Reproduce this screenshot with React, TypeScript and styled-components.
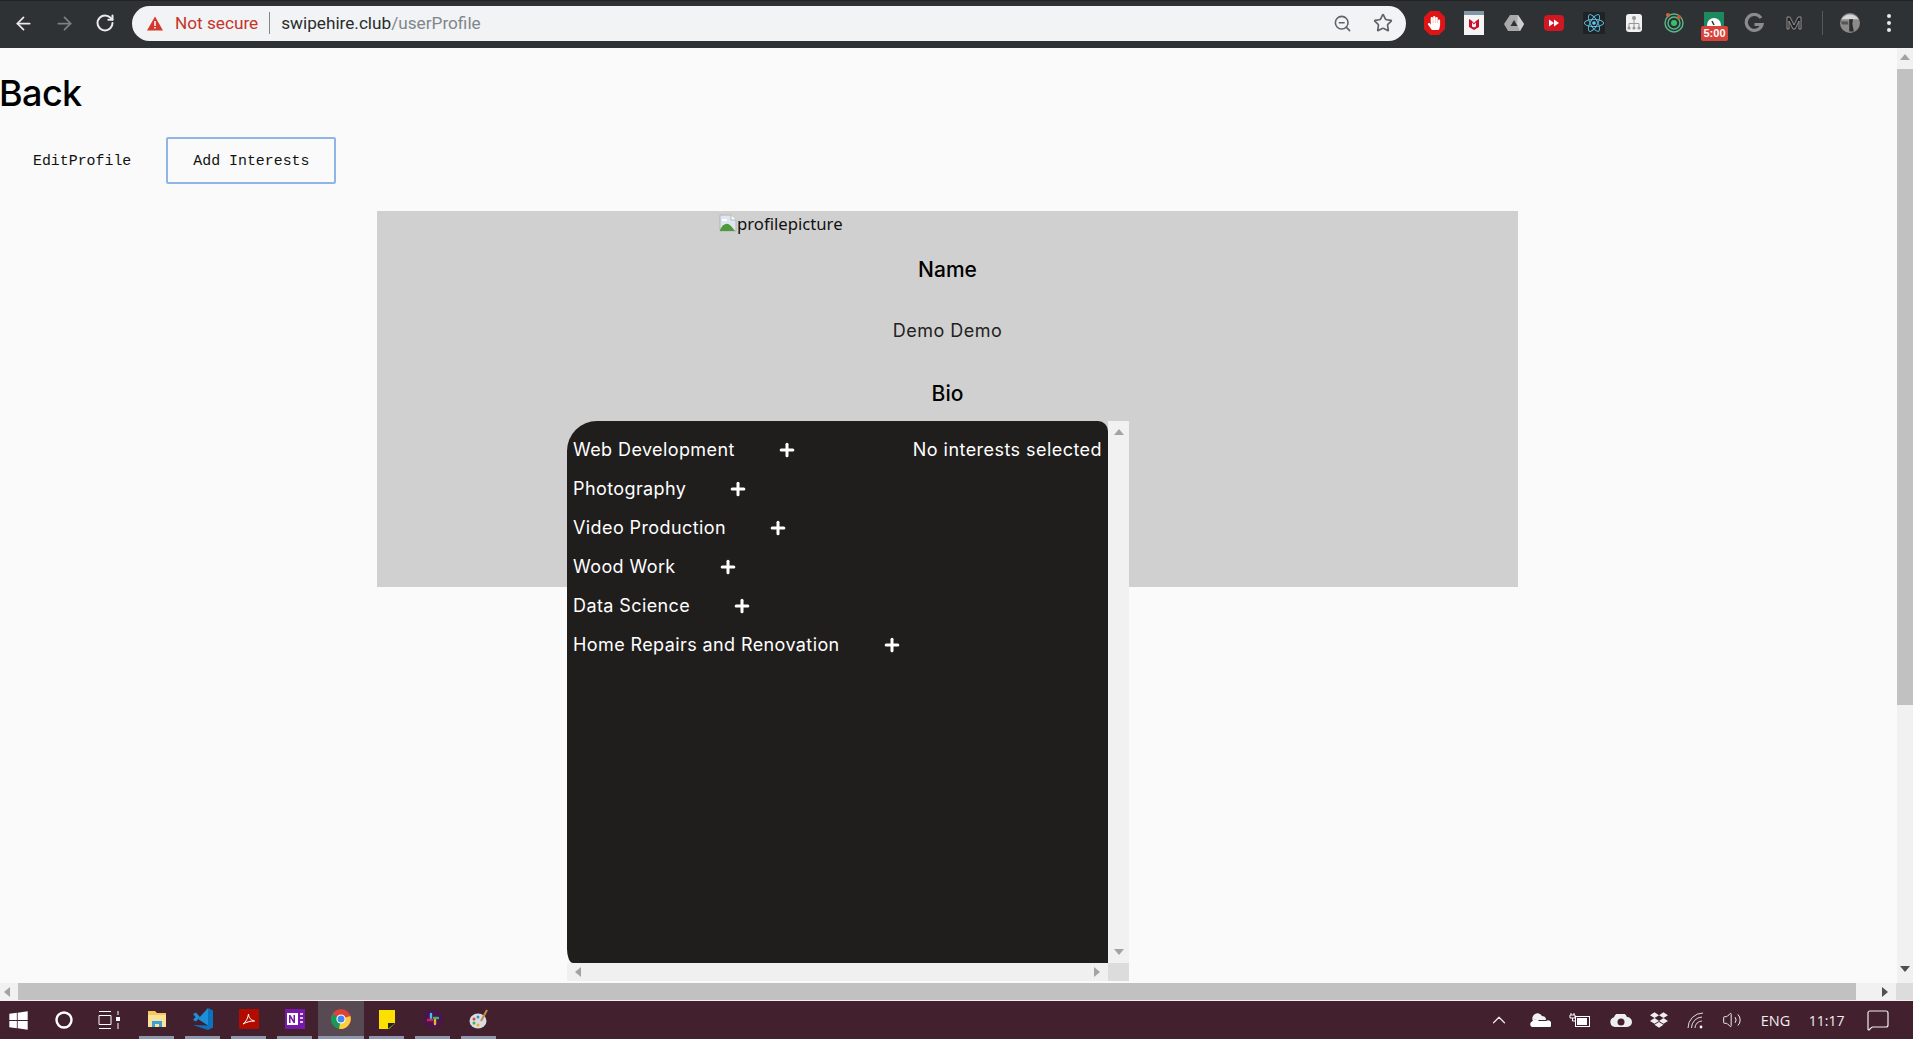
import React from "react";
import styled, { createGlobalStyle } from "styled-components";
import {
  ArrowLeft,
  ArrowRight,
  RotateCw,
  ZoomOut,
  Star,
  ChevronUp,
  Volume2,
  MessageSquare,
  Plus,
} from "lucide-react";
import { FaDropbox, FaHandPaper, FaReact, FaWindows } from "react-icons/fa";

const interests = [
  "Web Development",
  "Photography",
  "Video Production",
  "Wood Work",
  "Data Science",
  "Home Repairs and Renovation",
];

const GlobalStyle = createGlobalStyle`
  html, body {
    margin: 0;
    height: 100%;
    overflow: hidden;
    background: #fafafa;
  }
  * { box-sizing: border-box; }
`;

const Screen = styled.div`
  width: 1913px;
  height: 1043px;
  display: flex;
  flex-direction: column;
  font-family: "Noto Sans", sans-serif;
  background: #fafafa;
`;

const ChromeBar = styled.div`
  height: 48px;
  flex: none;
  background: #2f3235;
  border-top: 1px solid #202326;
  padding-bottom: 3px;
  display: flex;
  align-items: center;
  color: #e8eaed;
`;

const NavGroup = styled.div`
  width: 132px;
  flex: none;
  display: flex;
  align-items: center;
  gap: 20px;
  padding-left: 13px;
`;

const Omnibox = styled.div`
  width: 1274px;
  height: 35px;
  flex: none;
  background: #f1f3f4;
  border-radius: 18px;
  display: flex;
  align-items: center;
  padding: 0 13px 0 15px;
  font-family: "Roboto", sans-serif;
  font-size: 17.2px;
`;

const NotSecure = styled.span`
  color: #c5352b;
  margin-left: 12px;
  padding-right: 11px;
  border-right: 1px solid #80868b;
  line-height: 22px;
`;

const Host = styled.span`
  color: #2a2c2e;
  margin-left: 11px;
`;

const UrlPath = styled.span`
  color: #80868b;
`;

const OmniActions = styled.div`
  margin-left: auto;
  display: flex;
  align-items: center;
  gap: 21px;
  color: #5f6368;
`;

const Extensions = styled.div`
  flex: 1;
  display: flex;
  align-items: center;
  padding-left: 18px;
  gap: 20px;
`;

const ExtSlot = styled.div`
  width: 20px;
  height: 22px;
  flex: none;
  position: relative;
  display: flex;
  align-items: center;
  justify-content: center;
`;

const TimerBadge = styled.span`
  position: absolute;
  left: -3px;
  bottom: -7px;
  width: 27px;
  height: 15px;
  background: #d9423a;
  color: #fff;
  border-radius: 2px;
  font: bold 11px/15px "Liberation Sans", sans-serif;
  text-align: center;
`;

const ToolbarDivider = styled.div`
  width: 1px;
  height: 24px;
  background: #55595d;
  flex: none;
  margin: 0 -3px 0 -2px;
`;

const MenuDots = styled.div`
  display: flex;
  flex-direction: column;
  gap: 3px;
  margin-left: 7px;
`;

const Dot = styled.span`
  width: 4px;
  height: 4px;
  border-radius: 50%;
  background: #e8eaed;
`;

const Viewport = styled.div`
  height: 935px;
  flex: none;
  display: flex;
`;

const Page = styled.div`
  flex: 1;
  position: relative;
  overflow: hidden;
  background: #fafafa;
`;

const BackTitle = styled.h1`
  margin: 16px 0 0 -1px;
  font: 500 36px/58px "Inter", sans-serif;
  letter-spacing: -0.6px;
  color: #000;
`;

const Tabs = styled.div`
  display: flex;
  margin-top: 15px;
  align-items: center;
`;

const Tab = styled.button<{ $active?: boolean }>`
  height: 47px;
  padding: 0 ${(p) => (p.$active ? "25px" : "24px")};
  margin-left: ${(p) => (p.$active ? "9px" : "7px")};
  font: 14.9px/18px "Liberation Mono", monospace;
  color: #111;
  background: transparent;
  border-radius: 2px;
  border: 2px solid ${(p) => (p.$active ? "#8fb5e8" : "transparent")};
`;

const ProfileCard = styled.section`
  width: 1141px;
  height: 376px;
  margin: 27px 0 0 377px;
  background: #d0d0d0;
  display: flex;
  flex-direction: column;
`;

const BrokenImage = styled.div`
  margin-left: 342px;
  height: 24px;
  display: flex;
  align-items: center;
  font: 16.7px "Noto Sans", sans-serif;
  color: #111;

  svg {
    flex: none;
  }
`;

const Field = styled.div`
  text-align: center;
`;

const FieldLabel = styled.h3`
  margin: 20px 0 0;
  font: 500 21px/30px "Inter", sans-serif;
  color: #000;
`;

const FieldValue = styled.p`
  margin: 34px 0 36px;
  font: 400 18px/24px "Inter", sans-serif;
  letter-spacing: 0.5px;
  color: #222;
`;

const InterestsPanel = styled.div`
  position: absolute;
  left: 567px;
  top: 373px;
  width: 562px;
  height: 560px;
  display: grid;
  grid-template-columns: 541px 21px;
  grid-template-rows: 542px 18px;
`;

const InterestsBody = styled.div`
  background: #201e1d;
  border-radius: 30px 10px 0 6px / 30px 10px 0 14px;
  padding: 9px 6px;
  display: flex;
  justify-content: space-between;
  color: #fff;
  font: 400 18px/39px "Inter", sans-serif;
  letter-spacing: 0.4px;
`;

const InterestList = styled.ul`
  list-style: none;
  margin: 0;
  padding: 0;
`;

const InterestRow = styled.li`
  display: flex;
  align-items: center;
  gap: 42px;
  height: 39px;
`;

const NoneSelected = styled.span`
  height: 39px;
  letter-spacing: 0.45px;
`;

const VTrack = styled.div`
  background: #f1f1f1;
  display: flex;
  flex-direction: column;
  justify-content: space-between;
  align-items: center;
  padding: 8px 0;
`;

const HTrack = styled.div`
  background: #f0f0f0;
  display: flex;
  align-items: center;
  justify-content: space-between;
  padding: 0 8px;
`;

const Corner = styled.div`
  background: #dcdcdc;
`;

const Arrow = styled.span<{ $dir: "up" | "down" | "left" | "right"; $dark?: boolean }>`
  width: 0;
  height: 0;
  border: 5px solid transparent;
  ${(p) => {
    const color = p.$dark ? "#505050" : "#a3a3a3";
    if (p.$dir === "up") return `border-bottom: 6px solid ${color}; border-top: 0;`;
    if (p.$dir === "down") return `border-top: 6px solid ${color}; border-bottom: 0;`;
    if (p.$dir === "left") return `border-right: 6px solid ${color}; border-left: 0;`;
    return `border-left: 6px solid ${color}; border-right: 0;`;
  }}
`;

const PageVScroll = styled.div`
  width: 16px;
  flex: none;
  background: #f1f1f1;
  padding-bottom: 6px;
  display: flex;
  flex-direction: column;
  align-items: center;
`;

const PageVThumb = styled.div`
  width: 16px;
  height: 636px;
  background: #c1c1c1;
  margin-top: 4px;
`;

const ScrollEnd = styled.div`
  height: 17px;
  flex: none;
  display: flex;
  align-items: center;
  justify-content: center;
`;

const PageVSpacer = styled.div`
  flex: 1;
`;

const PageHScroll = styled.div`
  height: 17px;
  flex: none;
  display: flex;
  align-items: stretch;
  background: #f1f1f1;
`;

const HEnd = styled.div<{ $side: "start" | "end" }>`
  width: ${(p) => (p.$side === "start" ? "18px" : "22px")};
  padding-right: ${(p) => (p.$side === "start" ? "4px" : "0")};
  flex: none;
  display: flex;
  align-items: center;
  justify-content: center;
`;

const HThumb = styled.div`
  width: 1838px;
  background: #c1c1c1;
`;

const HSpacer = styled.div`
  flex: 1;
`;

const HCorner = styled.div`
  width: 17px;
  flex: none;
  background: #dcdcdc;
`;

const Taskbar = styled.div`
  height: 39px;
  flex: none;
  border-top: 1px solid #f4eef0;
  background: #42202e;
  display: flex;
  align-items: center;
  color: #fff;
`;

const TaskButton = styled.div`
  width: 45px;
  height: 100%;
  flex: none;
  display: flex;
  align-items: center;
  justify-content: center;

  &:first-child {
    margin-left: -4px;
  }
`;

const TaskApps = styled.div`
  display: flex;
  height: 100%;
  margin-left: 3px;
`;

const RunningApp = styled.div<{ $active?: boolean }>`
  width: 46px;
  height: 100%;
  flex: none;
  position: relative;
  display: flex;
  align-items: center;
  justify-content: center;
  padding-bottom: 2px;
  background: ${(p) => (p.$active ? "#574a52" : "transparent")};

  &::after {
    content: "";
    position: absolute;
    bottom: 0;
    height: 3px;
    background: #8e97ad;
    left: ${(p) => (p.$active ? "0" : "5px")};
    right: ${(p) => (p.$active ? "0" : "6px")};
  }
`;

const Tray = styled.div`
  margin-left: auto;
  display: flex;
  align-items: center;
  gap: 18.5px;
  padding-right: 23px;
  font: 14.5px "Open Sans", sans-serif;
  color: #eee;
`;

const Clock = styled.span`
  font-size: 14px;
  margin-right: 3px;
`;

const Sliver = styled.div`
  height: 4px;
  flex: none;
  background: #fff;
`;

function BrokenImageIcon() {
  return (
    <svg width="18" height="18" viewBox="0 0 18 18">
      <path d="M1 1h11l5 5v11H1z" fill="#dfe6f2" stroke="#b5b5b5" />
      <path d="M12 1v5h5" fill="#fff" stroke="#b5b5b5" />
      <path d="M1 16 Q6 6 12 12 L16 17H1z" fill="#4f9a3b" />
      <path d="M3 5h5v2H3z" fill="#fff" />
    </svg>
  );
}

function AdblockIcon() {
  return (
    <ExtSlot>
      <svg width="21" height="24" viewBox="0 0 21 24" style={{ position: "absolute" }}>
        <path d="M6 0h9l6 6v12l-6 6H6l-6-6V6z" fill="#e01414" />
      </svg>
      <FaHandPaper size={14} color="#fff" style={{ position: "relative" }} />
    </ExtSlot>
  );
}

function McAfeeIcon() {
  return (
    <svg width="20" height="24" viewBox="0 0 20 24">
      <rect x="0" y="0" width="20" height="24" fill="#f4f4f4" />
      <rect x="0" y="0" width="20" height="4" fill="#7f97a6" />
      <path d="M5 8l2.500 1.500L10 12l2.500-2.500L15 8v8l-5 3-5-3z" fill="#c8102e" />
      <path d="M8 11.500v4l2 1 2-1v-4l-2 2z" fill="#f4f4f4" />
    </svg>
  );
}

function DriveIcon() {
  return (
    <svg width="20" height="18" viewBox="0 0 20 18">
      <path d="M6 1h8l6 9-4 7H4l-4-7z" fill="#a9a9a9" />
      <path d="M14 1l6 9-4 7-3-7z" fill="#cfcfcf" />
      <path d="M10 6l3.500 6h-7z" fill="#2f3235" />
    </svg>
  );
}

function ForwardIcon() {
  return (
    <svg width="20" height="16" viewBox="0 0 20 16">
      <rect width="20" height="16" rx="4" fill="#d01722" />
      <path d="M5 4.500l5 3.500-5 3.500zM10 4.500l5 3.500-5 3.500z" fill="#fff" />
    </svg>
  );
}

function ReactIcon() {
  return (
    <ExtSlot>
      <svg width="22" height="22" viewBox="0 0 22 22" style={{ position: "absolute" }}>
        <rect width="22" height="22" fill="#1f2326" />
      </svg>
      <FaReact size={20} color="#61c8e8" style={{ position: "relative" }} />
    </ExtSlot>
  );
}

function SitemapIcon() {
  return (
    <svg width="16" height="18" viewBox="0 0 16 18">
      <rect width="16" height="18" rx="3" fill="#f2f2f2" />
      <path d="M8 5v4M3 13V9.500h10V13M8 9v4" stroke="#999" fill="none" />
      <circle cx="8" cy="4" r="2" fill="#999" />
      <circle cx="3" cy="14" r="1.600" fill="#999" />
      <circle cx="8" cy="14" r="1.600" fill="#999" />
      <circle cx="13" cy="14" r="1.600" fill="#999" />
    </svg>
  );
}

function OrbitIcon() {
  return (
    <svg width="20" height="22" viewBox="0 0 20 22">
      <circle cx="10" cy="11" r="9" fill="none" stroke="#58b98a" strokeWidth="1.400" />
      <circle cx="10" cy="11" r="6" fill="none" stroke="#58b98a" strokeWidth="1.400" />
      <circle cx="10" cy="11" r="3" fill="#35c06f" />
      <circle cx="4" cy="3" r="2" fill="#c96a36" />
      <circle cx="15" cy="5" r="2" fill="#c9562d" />
    </svg>
  );
}

function TimerIcon() {
  return (
    <svg width="20" height="22" viewBox="0 0 20 22">
      <rect width="20" height="22" fill="#1c8a5e" />
      <circle cx="10" cy="13" r="7" fill="#fff" />
      <path d="M10 13l-2-4" stroke="#333" strokeWidth="1.500" />
    </svg>
  );
}

function GIcon() {
  return (
    <svg width="20" height="20" viewBox="0 0 20 20">
      <path d="M17 5A8 8 0 1 0 18 11.500H10.500" fill="none" stroke="#8b8b8b" strokeWidth="3.200" />
    </svg>
  );
}

function MIcon() {
  return (
    <svg width="16" height="16" viewBox="0 0 16 16">
      <path d="M1 2h3l4 8 4-8h3v12h-2V6L9 14H7L3 6v8H1z" fill="#222" stroke="#a8a8a8" strokeWidth="0.800" />
    </svg>
  );
}

function AvatarIcon() {
  return (
    <svg width="26" height="26" viewBox="0 0 26 26">
      <circle cx="13" cy="13" r="13" fill="#8b8b8b" />
      <path d="M2 8a13 13 0 0 1 22 0z" fill="#d6d6d6" />
      <path d="M12 8h5l-1 6 2 10h-6z" fill="#2d2d2d" />
      <path d="M1 11h9l1 4H3z" fill="#555" />
    </svg>
  );
}

function NotSecureIcon() {
  return (
    <svg width="16" height="15" viewBox="0 0 16 15">
      <path d="M8 0.500L16 14.500H0z" fill="#d33a2c" />
      <path d="M7.200 5h1.600v5H7.200zM7.200 11h1.600v1.600H7.200z" fill="#f1f3f4" />
    </svg>
  );
}

function TaskViewIcon() {
  return (
    <svg width="22" height="20" viewBox="0 0 22 20" fill="none" stroke="#fff">
      <path d="M1 1.500h12M1 18.500h12M1 5.500h12v9H1zM20 1v4M20 13v6" />
      <rect x="18" y="7" width="4" height="4" fill="#fff" stroke="none" />
    </svg>
  );
}

function FolderIcon() {
  return (
    <svg width="20" height="20" viewBox="0 0 20 20">
      <path d="M1 2h7l2 2h9v14H1z" fill="#f7c95c" />
      <path d="M1 6h18v12H1z" fill="#fbe29b" />
      <path d="M5 18v-6h10v6h-3v-3H8v3z" fill="#37a3d8" />
    </svg>
  );
}

function VsCodeIcon() {
  return (
    <svg width="22" height="24" viewBox="0 0 22 24">
      <path d="M16 1l5 2.400v17.200L16 23 1 18l15 .5z" fill="#0d72bd" />
      <path d="M16 1v17.500L6 12z" fill="#1b8fdc" />
      <path d="M1 7l3-1.500 4 4.500-4 4.500-3-1.500L3.500 10z" fill="#1b8fdc" />
    </svg>
  );
}

function AcrobatIcon() {
  return (
    <svg width="20" height="20" viewBox="0 0 20 20">
      <rect width="20" height="20" rx="1" fill="#b30b00" />
      <path d="M4 15c3-2 5-6 5.500-10 .5 4 2 6 6 7-4 0-8 1-11.500 3z" fill="none" stroke="#fff" />
    </svg>
  );
}

function OneNoteIcon() {
  return (
    <svg width="20" height="20" viewBox="0 0 20 20">
      <rect width="20" height="20" fill="#7719aa" />
      <rect x="2" y="4" width="11" height="12" fill="#fff" />
      <path d="M4 14V6h1.500l3 5V6H10v8H8.500l-3-5v5z" fill="#7719aa" />
      <path d="M15 5h3M15 9h3M15 13h3" stroke="#fff" strokeWidth="1.600" />
    </svg>
  );
}

function ChromeIcon() {
  return (
    <svg width="20" height="20" viewBox="0 0 20 20">
      <circle cx="10" cy="10" r="10" fill="#db4437" />
      <path d="M10 10L1.500 5A10 10 0 0 0 8 19.800z" fill="#0f9d58" />
      <path d="M10 10l9.300-3A10 10 0 0 1 8 19.800z" fill="#ffcd40" />
      <circle cx="10" cy="10" r="4.600" fill="#fff" />
      <circle cx="10" cy="10" r="3.500" fill="#4285f4" />
    </svg>
  );
}

function StickyIcon() {
  return (
    <svg width="16" height="19" viewBox="0 0 16 19">
      <path d="M0 0h16v13l-6 6H0z" fill="#fce100" />
      <path d="M9 19v-6h7z" fill="#222" />
    </svg>
  );
}

function SlackIcon() {
  return (
    <svg width="20" height="20" viewBox="0 0 20 20">
      <circle cx="10" cy="10" r="10" fill="#4a154b" />
      <path d="M8 5v4" stroke="#36c5f0" strokeWidth="2.400" strokeLinecap="round" />
      <path d="M11 9h4" stroke="#2eb67d" strokeWidth="2.400" strokeLinecap="round" />
      <path d="M12 11v4" stroke="#ecb22e" strokeWidth="2.400" strokeLinecap="round" />
      <path d="M5 11h4" stroke="#e01e5a" strokeWidth="2.400" strokeLinecap="round" />
    </svg>
  );
}

function PaletteIcon() {
  return (
    <svg width="20" height="22" viewBox="0 0 20 22">
      <ellipse cx="9" cy="13" rx="8.500" ry="7.500" fill="#d7dde1" />
      <circle cx="5" cy="11" r="1.500" fill="#d8443a" />
      <circle cx="9" cy="9" r="1.500" fill="#3a8dde" />
      <circle cx="5" cy="15" r="1.500" fill="#4caf50" />
      <circle cx="9" cy="17" r="1.500" fill="#f2b01e" />
      <path d="M12 13L18 2" stroke="#c88a4a" strokeWidth="2" />
    </svg>
  );
}

function OneDriveIcon() {
  return (
    <svg width="22" height="14" viewBox="0 0 22 14">
      <path d="M4 8a5 5 0 0 1 9-5 4 4 0 0 1 4 4H8a3 3 0 0 0-4 1z" fill="#f2f2f2" />
      <path d="M3 14a3 3 0 0 1 0-5.500 4.500 4.500 0 0 1 7-.5h7a3 3 0 0 1 4 6z" fill="#fff" />
    </svg>
  );
}

function BatteryIcon() {
  return (
    <svg width="22" height="15" viewBox="0 0 22 15">
      <path d="M2 0v2M5 0v2M1 2h5v3H1zM3.500 5v3H6" stroke="#fff" fill="none" />
      <rect x="6.500" y="3.500" width="14" height="10" fill="none" stroke="#fff" />
      <rect x="8" y="5" width="10" height="7" fill="#fff" />
    </svg>
  );
}

function CloudSyncIcon() {
  return (
    <svg width="22" height="13" viewBox="0 0 22 13">
      <path d="M5 13a5 5 0 0 1-1-9.800A7 7 0 0 1 17 3a5 5 0 0 1 0 10z" fill="#eee" />
      <circle cx="11" cy="8" r="3.500" fill="#42202e" />
    </svg>
  );
}

function WifiIcon() {
  return (
    <svg width="17" height="17" viewBox="0 0 17 17" fill="none" stroke="#ddd">
      <path d="M1 16A15 15 0 0 1 16 1M4.500 16A11 11 0 0 1 15 5M8 16a7 7 0 0 1 7-7" />
      <circle cx="14" cy="15" r="1.400" fill="#fff" stroke="none" />
    </svg>
  );
}

const extensions = [
  <McAfeeIcon key="mcafee" />,
  <DriveIcon key="drive" />,
  <ForwardIcon key="forward" />,
];

export default function App() {
  return (
    <Screen>
      <GlobalStyle />
      <ChromeBar>
        <NavGroup>
          <ArrowLeft size={21} />
          <ArrowRight size={21} color="#7c7f83" />
          <RotateCw size={20} strokeWidth={2.4} />
        </NavGroup>
        <Omnibox>
          <NotSecureIcon />
          <NotSecure>Not secure</NotSecure>
          <Host>
            swipehire.club<UrlPath>/userProfile</UrlPath>
          </Host>
          <OmniActions>
            <ZoomOut size={19} />
            <Star size={20} />
          </OmniActions>
        </Omnibox>
        <Extensions>
          <AdblockIcon />
          {extensions.map((icon) => (
            <ExtSlot key={icon.key}>{icon}</ExtSlot>
          ))}
          <ReactIcon />
          <ExtSlot>
            <SitemapIcon />
          </ExtSlot>
          <ExtSlot>
            <OrbitIcon />
          </ExtSlot>
          <ExtSlot>
            <TimerIcon />
            <TimerBadge>5:00</TimerBadge>
          </ExtSlot>
          <ExtSlot>
            <GIcon />
          </ExtSlot>
          <ExtSlot>
            <MIcon />
          </ExtSlot>
          <ToolbarDivider />
          <ExtSlot>
            <AvatarIcon />
          </ExtSlot>
          <MenuDots>
            <Dot />
            <Dot />
            <Dot />
          </MenuDots>
        </Extensions>
      </ChromeBar>

      <Viewport>
        <Page>
          <BackTitle>Back</BackTitle>
          <Tabs>
            <Tab>EditProfile</Tab>
            <Tab $active>Add Interests</Tab>
          </Tabs>
          <ProfileCard>
            <BrokenImage>
              <BrokenImageIcon />
              profilepicture
            </BrokenImage>
            <Field>
              <FieldLabel>Name</FieldLabel>
              <FieldValue>Demo Demo</FieldValue>
              <FieldLabel>Bio</FieldLabel>
            </Field>
          </ProfileCard>
          <InterestsPanel>
            <InterestsBody>
              <InterestList>
                {interests.map((name) => (
                  <InterestRow key={name}>
                    {name}
                    <Plus size={20} strokeWidth={3.6} />
                  </InterestRow>
                ))}
              </InterestList>
              <NoneSelected>No interests selected</NoneSelected>
            </InterestsBody>
            <VTrack>
              <Arrow $dir="up" />
              <Arrow $dir="down" />
            </VTrack>
            <HTrack>
              <Arrow $dir="left" />
              <Arrow $dir="right" />
            </HTrack>
            <Corner />
          </InterestsPanel>
        </Page>
        <PageVScroll>
          <ScrollEnd>
            <Arrow $dir="up" />
          </ScrollEnd>
          <PageVThumb />
          <PageVSpacer />
          <ScrollEnd>
            <Arrow $dir="down" $dark />
          </ScrollEnd>
        </PageVScroll>
      </Viewport>

      <PageHScroll>
        <HEnd $side="start">
          <Arrow $dir="left" />
        </HEnd>
        <HThumb />
        <HSpacer />
        <HEnd $side="end">
          <Arrow $dir="right" $dark />
        </HEnd>
        <HCorner />
      </PageHScroll>

      <Taskbar>
        <TaskButton>
          <FaWindows size={21} />
        </TaskButton>
        <TaskButton>
          <svg width="18" height="18" viewBox="0 0 18 18">
            <circle cx="9" cy="9" r="7.5" fill="none" stroke="#fff" strokeWidth="2.4" />
          </svg>
        </TaskButton>
        <TaskButton>
          <TaskViewIcon />
        </TaskButton>
        <TaskApps>
          <RunningApp>
            <FolderIcon />
          </RunningApp>
          <RunningApp>
            <VsCodeIcon />
          </RunningApp>
          <RunningApp>
            <AcrobatIcon />
          </RunningApp>
          <RunningApp>
            <OneNoteIcon />
          </RunningApp>
          <RunningApp $active>
            <ChromeIcon />
          </RunningApp>
          <RunningApp>
            <StickyIcon />
          </RunningApp>
          <RunningApp>
            <SlackIcon />
          </RunningApp>
          <RunningApp>
            <PaletteIcon />
          </RunningApp>
        </TaskApps>
        <Tray>
          <ChevronUp size={22} strokeWidth={1.3} />
          <OneDriveIcon />
          <BatteryIcon />
          <CloudSyncIcon />
          <FaDropbox size={18} />
          <WifiIcon />
          <Volume2 size={20} strokeWidth={1.2} />
          <span>ENG</span>
          <Clock>11:17</Clock>
          <MessageSquare size={24} strokeWidth={1.2} />
        </Tray>
      </Taskbar>
      <Sliver />
    </Screen>
  );
}
